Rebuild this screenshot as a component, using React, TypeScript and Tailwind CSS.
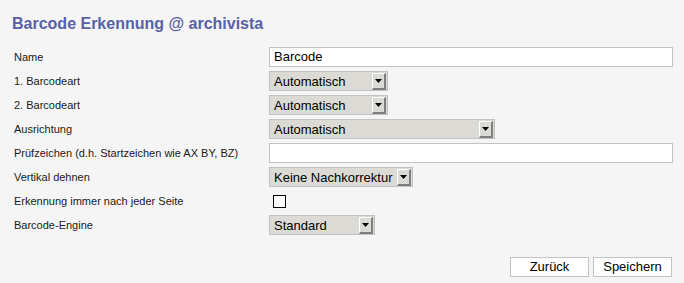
import React from "react";

const font = { fontFamily: '"Liberation Sans", Arial, sans-serif' };

function Arrow() {
  return (
    <span className="mr-[1px] flex h-[17px] w-[14px] items-center justify-center border-t border-l border-t-white border-l-white border-b-2 border-r-2 border-b-[#7f7f7f] border-r-[#7f7f7f] bg-[#dcdad5]">
      <svg width="7" height="4" viewBox="0 0 7 4">
        <path d="M0 0 H7 L3.5 4 Z" fill="#000" />
      </svg>
    </span>
  );
}

function Select({ value, w }: { value: string; w: string }) {
  return (
    <div className={`flex h-[20px] items-center justify-between border border-[#c2c2c2] bg-[#dcdad5] pl-[4px] text-[13px] text-black ${w}`}>
      <span className="leading-none">{value}</span>
      <Arrow />
    </div>
  );
}

function Row({ label, children }: { label: string; children: React.ReactNode }) {
  return (
    <div className="flex h-[24px] items-center">
      <div className="w-[269px] shrink-0 pl-[14px] text-[11px] text-[#1a1a1a]">{label}</div>
      <div className="flex flex-1 items-center">{children}</div>
    </div>
  );
}

export default function App() {
  return (
    <div className="h-[283px] w-[684px] bg-[#f5f5f5]" style={font}>
      <div className="pl-[12px] pt-[14px] text-[16px] font-bold leading-[20px] text-[#5861a8]">
        Barcode Erkennung @ archivista
      </div>
      <div className="mt-[11px] pr-[11px]">
        <Row label="Name">
          <div className="flex h-[20px] w-full items-center border border-[#c2c2c2] bg-white pl-[4px] text-[13px] text-black">
            Barcode
          </div>
        </Row>
        <Row label="1. Barcodeart">
          <Select value="Automatisch" w="w-[119px]" />
        </Row>
        <Row label="2. Barcodeart">
          <Select value="Automatisch" w="w-[119px]" />
        </Row>
        <Row label="Ausrichtung">
          <Select value="Automatisch" w="w-[226px]" />
        </Row>
        <Row label="Prüfzeichen (d.h. Startzeichen wie AX BY, BZ)">
          <div className="h-[20px] w-full border border-[#c2c2c2] bg-white" />
        </Row>
        <Row label="Vertikal dehnen">
          <Select value="Keine Nachkorrektur" w="w-[144px]" />
        </Row>
        <Row label="Erkennung immer nach jeder Seite">
          <div className="ml-[4px] h-[13px] w-[13px] border border-black bg-white" />
        </Row>
        <Row label="Barcode-Engine">
          <Select value="Standard" w="w-[106px]" />
        </Row>
      </div>
      <div className="mt-[20px] flex justify-end gap-[4px] pr-[12px]">
        <button className="flex h-[20px] w-[79px] items-center justify-center border border-[#c2c2c2] bg-white text-[13px] text-black">
          Zurück
        </button>
        <button className="flex h-[20px] w-[79px] items-center justify-center border border-[#c2c2c2] bg-white text-[13px] text-black">
          Speichern
        </button>
      </div>
    </div>
  );
}
